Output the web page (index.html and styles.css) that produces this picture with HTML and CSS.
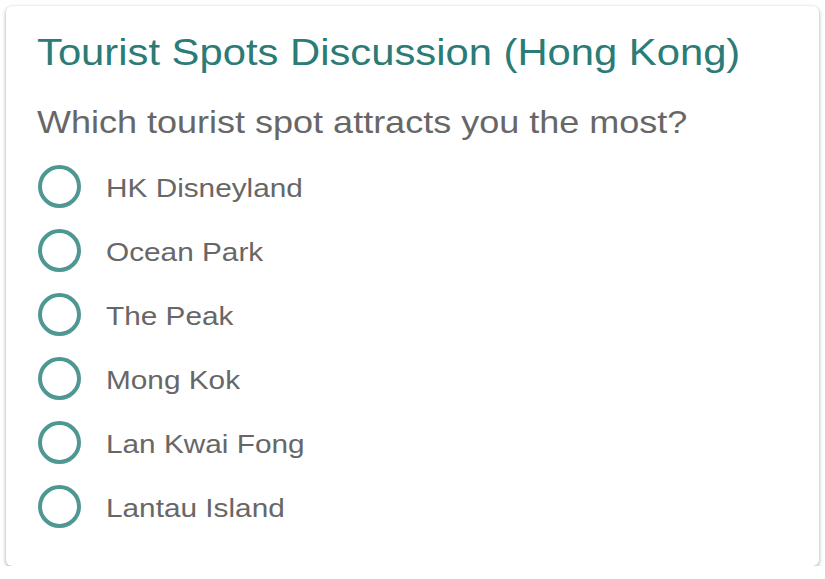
FILE: index.html
```html
<!DOCTYPE html>
<html>
<head>
<meta charset="utf-8">
<link rel="stylesheet" href="styles.css">
</head>
<body>
<div class="card">
  <h1 class="title"><span class="wide-title">Tourist Spots Discussion (Hong Kong)</span></h1>
  <p class="question"><span class="wide-question">Which tourist spot attracts you the most?</span></p>
  <ul class="options">
    <li class="option"><span class="radio"></span><span class="label">HK Disneyland</span></li>
    <li class="option"><span class="radio"></span><span class="label">Ocean Park</span></li>
    <li class="option"><span class="radio"></span><span class="label">The Peak</span></li>
    <li class="option"><span class="radio"></span><span class="label">Mong Kok</span></li>
    <li class="option"><span class="radio"></span><span class="label">Lan Kwai Fong</span></li>
    <li class="option"><span class="radio"></span><span class="label">Lantau Island</span></li>
  </ul>
</div>
</body>
</html>
```
FILE: styles.css
```css
html, body {
  margin: 0;
  padding: 0;
  background: #ffffff;
}
body {
  padding: 6px 6px 0 6px;
  font-family: "Liberation Sans", Arial, Helvetica, sans-serif;
}
.card {
  width: 813px;
  height: 560px;
  box-sizing: border-box;
  background: #fff;
  border-radius: 6px;
  box-shadow: 0 2px 4px rgba(0,0,0,0.3), 0 0 2px rgba(0,0,0,0.12);
  padding: 25px 31px 0 31px;
}
.title {
  margin: 0;
  font-weight: normal;
  font-size: 36px;
  line-height: 44px;
  color: #2b7b76;
  white-space: nowrap;
}
.wide-title {
  display: inline-block;
  transform: scaleX(1.16);
  transform-origin: 0 50%;
}
.question {
  margin: 27px 0 0 0;
  font-size: 32px;
  line-height: 40px;
  color: #676767;
  white-space: nowrap;
}
.wide-question {
  display: inline-block;
  transform: scaleX(1.125);
  transform-origin: 0 50%;
}
.options {
  list-style: none;
  margin: 12px 0 0 0;
  padding: 0;
}
.option {
  display: flex;
  align-items: center;
  height: 64px;
}
.radio {
  width: 43px;
  height: 43px;
  box-sizing: border-box;
  border: 4.5px solid #4f9792;
  border-radius: 50%;
  margin-left: 1px;
  flex: none;
}
.label {
  margin-left: 25px;
  padding-top: 4px;
  font-size: 26px;
  color: #676767;
  white-space: nowrap;
  transform: scaleX(1.145);
  transform-origin: 0 50%;
}
```
